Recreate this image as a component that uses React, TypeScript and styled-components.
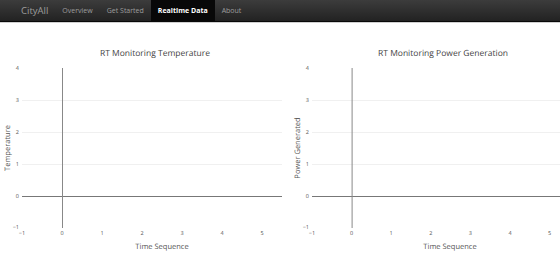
import React from "react";
import styled, { createGlobalStyle } from "styled-components";

const GlobalStyle = createGlobalStyle`
  html, body {
    margin: 0;
    padding: 0;
    background: #ffffff;
    overflow: hidden;
  }
  body {
    font-family: "Open Sans", "Liberation Sans", sans-serif;
    -webkit-font-smoothing: antialiased;
  }
`;

const NavBar = styled.nav`
  display: flex;
  align-items: stretch;
  height: 21px;
  padding-left: 14px;
  background: linear-gradient(to bottom, #3c3c3c 0%, #222222 100%);
  border-bottom: 1px solid #080808;
  box-shadow: 0 1px 0 #d0d0d0;
`;

const Brand = styled.a`
  display: flex;
  align-items: center;
  padding: 0 7px;
  font-size: 9.5px;
  color: #9d9d9d;
  text-decoration: none;
`;

const NavLink = styled.a<{ $active?: boolean }>`
  display: flex;
  align-items: center;
  padding: 0 7px;
  font-size: 7px;
  color: ${(p) => (p.$active ? "#ffffff" : "#9d9d9d")};
  font-weight: ${(p) => (p.$active ? 700 : 400)};
  background: ${(p) => (p.$active ? "#080808" : "transparent")};
  text-decoration: none;
`;

const ChartRow = styled.main`
  display: flex;
  margin-top: 1px;
  height: 237px;
`;

const ChartBox = styled.div<{ $width: number }>`
  flex: 0 0 ${(p) => p.$width}px;
  height: 100%;
  overflow: hidden;
`;

const ChartSvg = styled.svg`
  display: block;
  font-family: "Open Sans", "Liberation Sans", sans-serif;
  fill: #555555;
  text-rendering: geometricPrecision;
`;

type ChartProps = {
  width: number;
  title: string;
  titleX: number;
  yLabel: string;
  yLabelX: number;
  xLabelX: number;
  left: number; // pixel of x = -1
  unitX: number;
  right: number;
  tickLabelX: number;
};

const TOP = 45;
const UNIT_Y = 32;
const yOf = (v: number) => TOP + (4 - v) * UNIT_Y;

const Chart: React.FC<ChartProps> = ({
  width,
  title,
  titleX,
  yLabel,
  yLabelX,
  xLabelX,
  left,
  unitX,
  right,
  tickLabelX,
}) => {
  const xOf = (v: number) => left + (v + 1) * unitX;
  return (
    <ChartSvg width={width} height={237}>
      <text x={titleX} y={33} fontSize={8.5} textAnchor="middle" fill="#444444">
        {title}
      </text>

      {[1, 2, 3].map((v) => (
        <line key={v} x1={left} x2={right} y1={yOf(v) + 0.5} y2={yOf(v) + 0.5} stroke="#f0f0f0" strokeWidth={1} />
      ))}
      <line x1={left} x2={right} y1={yOf(0) + 0.5} y2={yOf(0) + 0.5} stroke="#777777" strokeWidth={1} />
      <line x1={xOf(0) + 0.5} x2={xOf(0) + 0.5} y1={yOf(4)} y2={yOf(-1)} stroke="#888888" strokeWidth={1} />

      {[4, 3, 2, 1, 0].map((v) => (
        <text key={v} x={tickLabelX} y={yOf(v) + 2} fontSize={5.5} textAnchor="end">
          {v}
        </text>
      ))}
      <text x={tickLabelX} y={yOf(-1) + 1} fontSize={5.5} textAnchor="end">
        −1
      </text>

      {[-1, 0, 1, 2, 3, 4, 5].map((v) => (
        <text key={v} x={xOf(v)} y={212} fontSize={5.5} textAnchor="middle">
          {v < 0 ? `−${-v}` : v}
        </text>
      ))}

      <text x={xLabelX} y={226} fontSize={7.5} textAnchor="middle">
        Time Sequence
      </text>
      <text
        x={yLabelX}
        y={125}
        fontSize={7.5}
        textAnchor="middle"
        transform={`rotate(-90 ${yLabelX} 125)`}
      >
        {yLabel}
      </text>
    </ChartSvg>
  );
};

export default function App() {
  return (
    <>
      <GlobalStyle />
      <NavBar>
        <Brand href="#">CityAll</Brand>
        <NavLink href="#">Overview</NavLink>
        <NavLink href="#">Get Started</NavLink>
        <NavLink href="#" $active>
          Realtime Data
        </NavLink>
        <NavLink href="#">About</NavLink>
      </NavBar>
      <ChartRow>
        <ChartBox $width={285}>
          <Chart
            width={285}
            title="RT Monitoring Temperature"
            titleX={155}
            yLabel="Temperature"
            yLabelX={10}
            xLabelX={162}
            left={22}
            unitX={40}
            right={282}
            tickLabelX={19}
          />
        </ChartBox>
        <ChartBox $width={275}>
          <Chart
            width={300}
            title="RT Monitoring Power Generation"
            titleX={158}
            yLabel="Power Generated"
            yLabelX={15}
            xLabelX={165}
            left={27}
            unitX={39.6}
            right={300}
            tickLabelX={24}
          />
        </ChartBox>
      </ChartRow>
    </>
  );
}
